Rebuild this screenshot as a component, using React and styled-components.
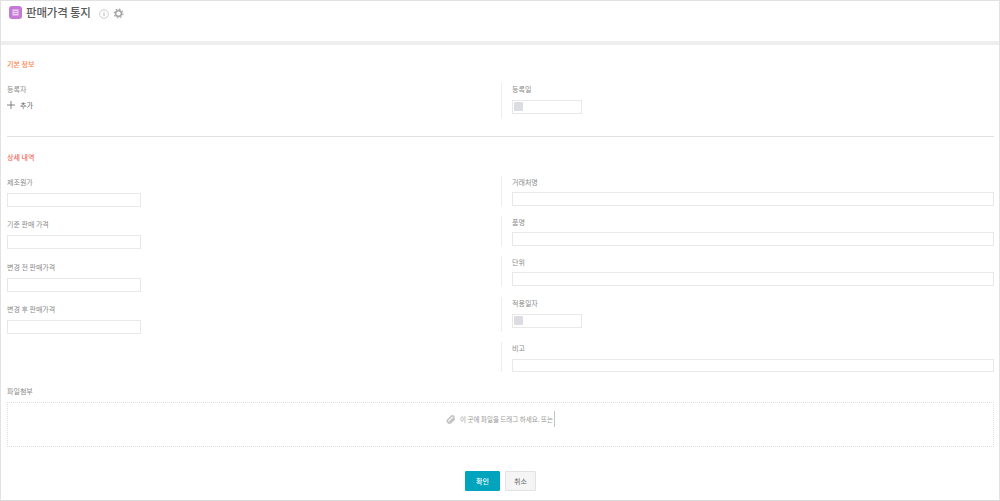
import React from "react";
import styled, { createGlobalStyle } from "styled-components";

const Global = createGlobalStyle`
  html, body { margin: 0; padding: 0; background: #fff; }
  body { font-family: "Noto Sans CJK KR", "Noto Sans", sans-serif; color: #777; }
  * { box-sizing: border-box; }
`;

const Page = styled.div`
  width: 1000px;
  height: 501px;
  border: 1px solid #e2e2e2;
  border-bottom-color: #d8d8d8;
  background: #fff;
  overflow: hidden;
`;

const Header = styled.header`
  height: 44px;
  padding: 4px 0 0 8px;
  display: flex;
  align-items: flex-start;
  border-bottom: 4px solid #eeeeee;
`;

const AppIcon = styled.span`
  width: 13px;
  height: 13px;
  margin-top: 1px;
  border-radius: 3px;
  background: #c67ad6;
  display: flex;
  align-items: center;
  justify-content: center;
`;

const Title = styled.h1`
  margin: 0 0 0 4px;
  font-size: 11.5px;
  line-height: 15px;
  font-weight: 500;
  color: #5a5a5a;
  letter-spacing: -0.2px;
`;

const HeadIcons = styled.div`
  margin: 3px 0 0 8px;
  display: flex;
  align-items: center;
  gap: 4px;
`;

const Body = styled.main`
  padding: 13px 5px 0 6px;
`;

const SectionTitle = styled.h2`
  margin: ${(p) => p.$top || 0}px 0 0;
  font-size: 7px;
  line-height: 12px;
  font-weight: 500;
  color: ${(p) => p.$color};
`;

const Columns = styled.div`
  margin-top: 13px;
  display: grid;
  grid-template-columns: 494px 1fr;
`;

const Stack = styled.div`
  display: flex;
  flex-direction: column;
  gap: ${(p) => p.$gap || 0}px;
`;

const Field = styled.div`
  height: ${(p) => p.$height}px;
  margin-top: ${(p) => p.$top || 0}px;
  display: flex;
  flex-direction: column;
  align-items: flex-start;
`;

const RightField = styled(Field)`
  border-left: 1px solid #eeeeee;
  padding-left: 10px;
`;

const Label = styled.label`
  display: block;
  margin-top: ${(p) => p.$top || 0}px;
  font-size: 7px;
  line-height: 12px;
  color: #8a8a8a;
`;

const Input = styled.div`
  height: 14px;
  width: ${(p) => p.$width || "100%"};
  margin-top: ${(p) => p.$top || 5}px;
  border: 1px solid #e8e8e8;
  background: #fff;
`;

const DateBox = styled(Input)`
  width: 70px;
  padding: 1px;
`;

const DateIcon = styled.span`
  display: block;
  width: 9px;
  height: 9px;
  border-radius: 1px;
  background: #dcdce3;
`;

const AddRow = styled.div`
  margin-top: 4px;
  display: flex;
  align-items: center;
  gap: 5px;
  font-size: 7px;
  line-height: 12px;
  color: #666;
`;

const Divider = styled.hr`
  margin: 18px 0 0;
  border: 0;
  border-top: 1px solid #e2e2e2;
`;

const DropZone = styled.div`
  margin-top: 5px;
  height: 45px;
  padding-bottom: 11px;
  border: 1px dotted #e0e0e0;
  display: flex;
  align-items: center;
  justify-content: center;
  gap: 4px;
  font-size: 6.5px;
  color: #999;
`;

const Caret = styled.span`
  width: 1px;
  height: 16px;
  background: #c4c4c4;
  margin-left: -3px;
`;

const Actions = styled.div`
  margin-top: 24px;
  display: flex;
  justify-content: center;
  gap: 5px;
`;

const Button = styled.button`
  width: ${(p) => p.$width}px;
  height: 20px;
  padding: 0;
  border-radius: 1px;
  font-family: inherit;
  font-size: 7px;
  font-weight: ${(p) => (p.$primary ? 500 : 400)};
  color: ${(p) => (p.$primary ? "#fff" : "#666")};
  background: ${(p) => (p.$primary ? "#00a5bd" : "#f5f5f5")};
  border: 1px solid ${(p) => (p.$primary ? "#00a5bd" : "#e2e2e2")};
`;

const leftFields = ["제조원가", "기준 판매 가격", "변경 전 판매가격", "변경 후 판매가격"];

export default function App() {
  return (
    <Page>
      <Global />
      <Header>
        <AppIcon>
          <svg width="7" height="7" viewBox="0 0 7 7">
            <rect x="0.5" y="0.5" width="6" height="6" fill="#ecd0f2" />
            <path d="M1.5 2.5h4M1.5 4.5h4" stroke="#c67ad6" strokeWidth="0.8" />
          </svg>
        </AppIcon>
        <Title>판매가격 통지</Title>
        <HeadIcons>
          <svg width="10" height="10" viewBox="0 0 10 10" fill="none">
            <circle cx="5" cy="5" r="4.4" stroke="#c4c4c4" strokeWidth="0.8" />
            <path d="M5 4.2v3M5 2.4v1" stroke="#b4b4b4" strokeWidth="1" />
          </svg>
          <svg width="11" height="11" viewBox="0 0 11 11" fill="none">
            <circle cx="5.5" cy="5.5" r="2.9" stroke="#a8a8a8" strokeWidth="1.6" />
            <circle cx="5.5" cy="5.5" r="4.3" stroke="#a8a8a8" strokeWidth="1.3" strokeDasharray="1.5 1.88" />
          </svg>
        </HeadIcons>
      </Header>
      <Body>
        <SectionTitle $color="#f7844e">기본 정보</SectionTitle>
        <Columns>
          <Field $height={35}>
            <Label>등록자</Label>
            <AddRow>
              <svg width="8" height="8" viewBox="0 0 8 8">
                <path d="M4 0v8M0 4h8" stroke="#666" strokeWidth="0.8" />
              </svg>
              추가
            </AddRow>
          </Field>
          <RightField $height={35}>
            <Label>등록일</Label>
            <DateBox>
              <DateIcon />
            </DateBox>
          </RightField>
        </Columns>
        <Divider />
        <SectionTitle $color="#f2695c" $top={14}>상세 내역</SectionTitle>
        <Columns>
          <Stack $gap={11}>
            {leftFields.map((l) => (
              <Field key={l} $height={31.3}>
                <Label>{l}</Label>
                <Input $width="134px" />
              </Field>
            ))}
          </Stack>
          <Stack>
            <RightField $height={30}>
              <Label>거래처명</Label>
              <Input $top={4} />
            </RightField>
            <RightField $height={30} $top={10}>
              <Label>품명</Label>
              <Input $top={4} />
            </RightField>
            <RightField $height={30} $top={10}>
              <Label>단위</Label>
              <Input $top={4} />
            </RightField>
            <RightField $height={35} $top={11}>
              <Label>적용일자</Label>
              <DateBox>
                <DateIcon />
              </DateBox>
            </RightField>
            <RightField $height={30} $top={10}>
              <Label>비고</Label>
              <Input />
            </RightField>
          </Stack>
        </Columns>
        <Label as="div" $top={13}>파일첨부</Label>
        <DropZone>
          <svg width="10" height="11" viewBox="0 0 24 24" fill="none" stroke="#c4c4c4" strokeWidth="4" strokeLinecap="round">
            <path d="M20 11l-8.5 8.5a5 5 0 0 1-7-7L13 4a3.3 3.3 0 0 1 4.7 4.7L9.5 17" />
          </svg>
          <span>이 곳에 파일을 드래그 하세요. 또는</span>
          <Caret />
        </DropZone>
        <Actions>
          <Button $primary $width={35}>확인</Button>
          <Button $width={31}>취소</Button>
        </Actions>
      </Body>
    </Page>
  );
}
